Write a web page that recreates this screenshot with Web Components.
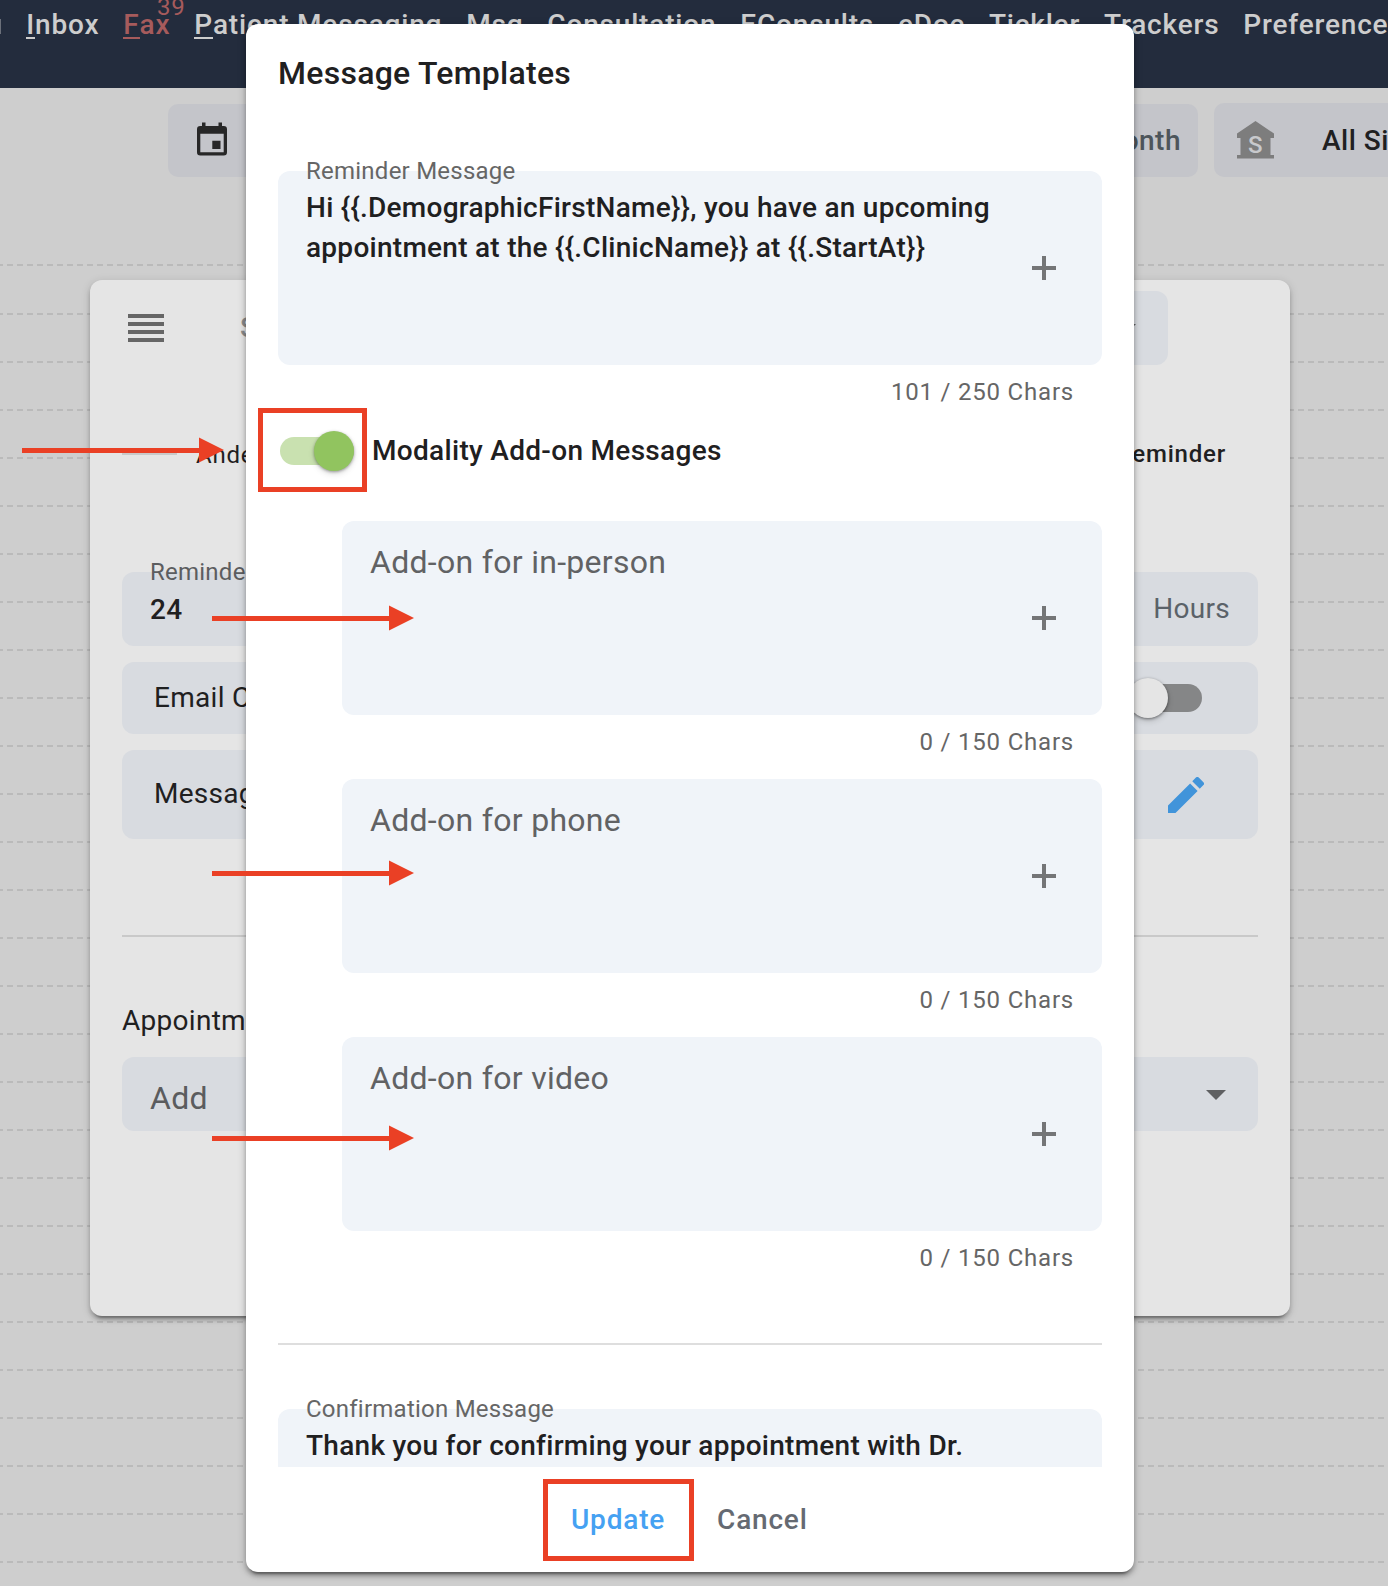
<!DOCTYPE html>
<html lang="en">
<head>
<meta charset="utf-8">
<title>Message Templates</title>
<style>
  html, body { margin: 0; padding: 0; }
  body { width: 1388px; height: 1586px; overflow: hidden; position: relative; background: #cecece; font-family: Roboto, "Liberation Sans", sans-serif; color: #1f2021; }
</style>
</head>
<body>
<reminder-app></reminder-app>
<script>
const define = (name, css, html) => customElements.define(name, class extends HTMLElement {
  constructor() {
    super();
    const t = document.createElement('template');
    t.innerHTML = `<style>:host{display:block;box-sizing:border-box}*{box-sizing:border-box}${css}</style>${typeof html === 'function' ? html(this) : html}`;
    this.attachShadow({ mode: 'open' }).appendChild(t.content.cloneNode(true));
  }
});

/* Navigation */
define('nav-item', `
  :host{flex:none;white-space:nowrap;font:500 28px/40px Roboto,sans-serif;letter-spacing:.82px;color:#cdcdcd}`, `<slot></slot>`);

define('app-nav', `
  :host{height:88px;background:#232c3d;overflow:hidden}
  nav{display:flex;padding-top:5px;height:45px}
  i{width:1px;height:15px;margin:14px 25.300px 0 0;background:#6b707a;flex:none}
  nav-item{margin-right:var(--m,23.900px)}
  b{text-decoration:none;font-weight:500;display:inline-block;line-height:30px;height:29px;border-bottom:2px solid}
  .fax{color:#a65b5c}
  sup{font-size:24px;line-height:0;vertical-align:19px;font-weight:400;margin-left:-13.500px;letter-spacing:.8px}`, `
  <nav><i></i>
    <nav-item style="--m:24px"><b>I</b>nbox</nav-item>
    <nav-item class="fax" style="--m:8.700px"><b>F</b>ax<sup>39</sup></nav-item>
    <nav-item><b>P</b>atient Messaging</nav-item>
    <nav-item>Msg</nav-item><nav-item>Consultation</nav-item><nav-item>EConsults</nav-item>
    <nav-item>eDoc</nav-item><nav-item>Tickler</nav-item><nav-item>Trackers</nav-item><nav-item>Preferences</nav-item>
  </nav>`);

/* Schedule toolbar */
define('tool-button', `
  :host{display:flex;align-items:center;height:73px;background:#c4c5ca;border-radius:10px;font:500 28px/40px Roboto,sans-serif;letter-spacing:.5px;flex:none;white-space:nowrap}`, `<slot></slot>`);

define('schedule-toolbar', `
  :host{display:flex;align-items:flex-end;height:89px;padding-left:168px;overflow:hidden}
  .date{width:232px;padding-left:24px}
  .month{width:200px;margin-left:598px;justify-content:flex-end;padding-right:17px;color:#4d555b}
  .sites{width:300px;height:74px;margin-left:16px;padding-left:23px}
  .sites span{margin:1px 0 0 48px}`, `
  <tool-button class="date"><svg width="40" height="40" viewBox="0 0 40 40" style="margin-bottom:4px" fill="#272727"><path fill-rule="evenodd" d="M10 3.500h3.500v3.500h13v-3.500h3.500v3.500h1.700q3.300 0 3.300 3.300v22.900q0 3.300-3.300 3.300h-23.400q-3.300 0-3.300-3.300v-22.900q0-3.300 3.300-3.300h1.700zM8.300 14.800v18.400h23.400v-18.400zM20.300 21.700h8.200v8.200h-8.200z"/></svg></tool-button>
  <tool-button class="month"><span>Month</span></tool-button>
  <tool-button class="sites"><svg width="37" height="38" viewBox="0 0 37 38"><path fill="#7d7d7d" d="M18.500 0L37 12.500V17H33.500V34H37V37.500H0V34H3.500V17H0V12.500z"/><text x="18.500" y="31.500" text-anchor="middle" font-family="Roboto" font-weight="500" font-size="24" fill="#c8c9cc">S</text></svg><span>All Sites</span></tool-button>`);

/* Dashed half-hour grid lines */
define('schedule-grid', `:host{position:absolute;inset:177px 0 0 0}svg{display:block}`, `
  <svg width="1388" height="1409">
    <defs>
      <pattern id="l" width="10" height="48" y="40" patternUnits="userSpaceOnUse"><path fill="#bababa" d="M0 0h3v2h-3zM7 0h3v2h-3z"/></pattern>
      <pattern id="r" width="10" height="48" y="40" patternUnits="userSpaceOnUse"><path fill="#bababa" d="M0 0h4v2h-4zM8 0h2v2h-2z"/></pattern>
    </defs>
    <rect y="130" width="700" height="1279" fill="url(#l)"/><rect x="700" y="130" width="688" height="1279" fill="url(#r)"/>
    <g transform="translate(0 47)"><rect y="40" width="700" height="2" fill="url(#l)"/><rect x="700" y="40" width="688" height="2" fill="url(#r)"/></g>
  </svg>`);

/* Shared controls */
define('toggle-switch', `
  :host{width:74px;height:40px;display:flex;align-items:center;flex:none}
  .track{width:100%;height:28px;border-radius:14px;background:#858687;display:flex;align-items:center}
  .thumb{width:40px;height:40px;flex:none;border-radius:50%;background:#e5e5e5;box-shadow:0 1px 3px rgba(0,0,0,.45),0 3px 6px rgba(0,0,0,.15)}
  :host([on]) .track{background:#c9e1b0}
  :host([on]) .thumb{background:#91c45f;margin-left:34px;box-shadow:0 1px 3px rgba(0,0,0,.35),0 3px 6px rgba(0,0,0,.12)}`, `<div class="track"><div class="thumb"></div></div>`);

define('drop-arrow', `:host{width:20px;height:10px;flex:none}svg{display:block}`, `<svg width="20" height="10"><path d="M0 0h20L10 10z" fill="#5f6062"/></svg>`);

define('setting-row', `
  :host{display:flex;align-items:center;justify-content:space-between;background:#d8dbe0;border-radius:12px;font:400 28px/40px Roboto,sans-serif;letter-spacing:.28px;white-space:nowrap}`, `<slot></slot>`);

/* Settings card */
define('settings-card', `
  :host{width:1200px;height:1036px;margin:103px 0 0 90px;padding:11px 32px 0;position:relative;border-radius:12px;background:#e5e5e5;box-shadow:0 6px 2px -4px rgba(0,0,0,.25),0 4px 4px rgba(0,0,0,.2),0 2px 10px rgba(0,0,0,.15);font:400 28px/40px Roboto,sans-serif;letter-spacing:.28px}
  header{display:flex;align-items:center;height:74px}
  .s{margin-left:76px;color:#8a8a8a;font-weight:500;flex:1}
  .pick{width:400px;height:74px;margin-right:90px;justify-content:flex-end;padding-right:32px}
  .pick drop-arrow{margin-top:2px}
  .steps{display:flex;align-items:center;height:60px;margin-top:59px;font-size:24px;letter-spacing:.8px}
  .steps i{width:55px;height:2px;background:#c9c9c9;margin-right:19px}
  .steps span{margin-top:2px}
  .steps b{font-weight:500;margin:-1px 32px 0 auto}
  .time{height:74px;margin-top:88px;padding:0 28px;align-items:flex-start}
  .time div{display:flex;flex-direction:column}
  .lab{font-size:24px;line-height:24px;margin-top:-12px;color:#5c5d5f;letter-spacing:.24px}
  .time b{font-weight:500;margin-top:6px}
  .hours{color:#5b6269;margin-top:17px}
  .mail{height:72px;margin-top:16px;padding:0 56px 0 32px}
  .msg{height:89px;margin-top:16px;padding:0 54px 0 32px}
  .msg span{margin-top:-1px}
  hr{border:0;height:2px;background:#c9c9c9;margin:96px 0 64px}
  .add{height:74px;margin-top:16px;padding:0 32px 0 28px;font-size:32px;color:#5b5c5e;letter-spacing:.3px}
  .add span{margin-top:8px}`, `
  <header><svg width="36" height="28" style="margin:0 0 0 6px"><path fill="#666" d="M0 0h36v4H0zM0 8h36v4H0zM0 16h36v4H0zM0 24h36v4H0z"/></svg><span class="s">S</span><setting-row class="pick"><drop-arrow></drop-arrow></setting-row></header>
  <div class="steps"><i></i><span>Ande</span><b>Reminder</b></div>
  <setting-row class="time"><div><span class="lab">Reminder</span><b>24</b></div><span class="hours">Hours</span></setting-row>
  <setting-row class="mail"><span>Email C</span><toggle-switch></toggle-switch></setting-row>
  <setting-row class="msg"><span>Message</span><svg width="36" height="36" viewBox="3 3 18 18"><path fill="#4194da" d="M3 17.250V21h3.750L17.810 9.940l-3.750-3.750L3 17.250zM20.710 7.040a1 1 0 0 0 0-1.410l-2.340-2.340a1 1 0 0 0-1.410 0l-1.830 1.830 3.750 3.750 1.830-1.830z"/></svg></setting-row>
  <hr><div>Appointm</div>
  <setting-row class="add"><span>Add</span><drop-arrow style="margin-top:2px"></drop-arrow></setting-row>`);

/* Message template field with floating label, insert button and character counter */
define('template-field', `
  .box{height:194px;border-radius:12px;background:#f0f4f9;display:flex;align-items:center;padding:0 46px 0 28px}
  .text{align-self:stretch;flex:1;white-space:nowrap}
  .label{font:400 24px/24px Roboto,sans-serif;letter-spacing:.24px;color:#666;margin-top:-12px;height:24px}
  .body{font:500 28px/40px Roboto,sans-serif;letter-spacing:.27px;margin-top:5px}
  .hint{font:400 32px/40px Roboto,sans-serif;letter-spacing:.3px;color:#616264;padding-top:21px}
  .count{font:400 24px/54px Roboto,sans-serif;letter-spacing:.790px;color:#666;text-align:right;padding-right:28px;height:54px}`, el => `
  <div class="box"><div class="text">${el.hasAttribute('label') ? `<div class="label">${el.getAttribute('label')}</div><div class="body"><slot></slot></div>` : `<div class="hint">${el.getAttribute('hint')}</div>`}</div>
  <svg width="24" height="24"><path fill="#747577" d="M10 0h4v10h10v4H14v10h-4V14H0v-4h10z"/></svg></div>
  ${el.hasAttribute('count') ? `<div class="count">${el.getAttribute('count')} Chars</div>` : ''}`);

define('message-dialog', `
  :host{position:absolute;left:246px;top:24px;width:888px;height:1548px;background:#fff;border-radius:12px;display:flex;flex-direction:column;padding:0 32px;box-shadow:0 6px 2px -4px rgba(0,0,0,.3),0 4px 4px rgba(0,0,0,.25),0 2px 10px rgba(0,0,0,.2)}
  h2{margin:0;font:500 32px/99px Roboto,sans-serif;letter-spacing:.27px;height:97px}
  .content{height:1346px;padding-top:50px;overflow:hidden}
  .mod{display:flex;align-items:center;height:64px;padding-left:2px;margin-bottom:38px;font:500 28px/40px Roboto,sans-serif;letter-spacing:.31px}
  .mod span{margin-left:18px}
  .addons{display:flex;flex-direction:column;gap:10px;padding-left:64px}
  hr{border:0;height:2px;background:#dedede;margin:58px 0 64px}
  footer{display:flex;height:105px;align-items:center;gap:52px;padding-left:293px;font:500 28px/40px Roboto,sans-serif;letter-spacing:.8px}
  .up{color:#45a1f2}.no{color:#656a72}`, `
  <h2>Message Templates</h2>
  <div class="content">
    <template-field label="Reminder Message" count="101 / 250">Hi {{.DemographicFirstName}}, you have an upcoming<br>appointment at the {{.ClinicName}} at {{.StartAt}}</template-field>
    <div class="mod"><toggle-switch on></toggle-switch><span>Modality Add-on Messages</span></div>
    <div class="addons">
      <template-field hint="Add-on for in-person" count="0 / 150"></template-field>
      <template-field hint="Add-on for phone" count="0 / 150"></template-field>
      <template-field hint="Add-on for video" count="0 / 150"></template-field>
    </div>
    <hr>
    <template-field label="Confirmation Message">Thank you for confirming your appointment with Dr.</template-field>
  </div>
  <footer><span class="up">Update</span><span class="no">Cancel</span></footer>`);

/* Annotations laid over the dialog */
define('callout-arrow', `:host{position:absolute;width:202px;height:26px}svg{display:block}`, `<svg width="202" height="26"><path fill="#ea4025" d="M0 11h177V.500L202 13L177 25.500V16H0z"/></svg>`);
define('callout-box', `:host{position:absolute;border:5px solid #ea4025}`, ``);

define('reminder-app', `:host{height:1586px}`, `
  <app-nav></app-nav>
  <schedule-toolbar></schedule-toolbar>
  <schedule-grid></schedule-grid>
  <settings-card></settings-card>
  <message-dialog></message-dialog>
  <callout-arrow style="left:22px;top:437px"></callout-arrow>
  <callout-arrow style="left:212px;top:605px"></callout-arrow>
  <callout-arrow style="left:212px;top:860px"></callout-arrow>
  <callout-arrow style="left:212px;top:1125px"></callout-arrow>
  <callout-box style="left:258px;top:408px;width:109px;height:84px"></callout-box>
  <callout-box style="left:543px;top:1479px;width:151px;height:82px"></callout-box>`);
</script>
</body>
</html>
